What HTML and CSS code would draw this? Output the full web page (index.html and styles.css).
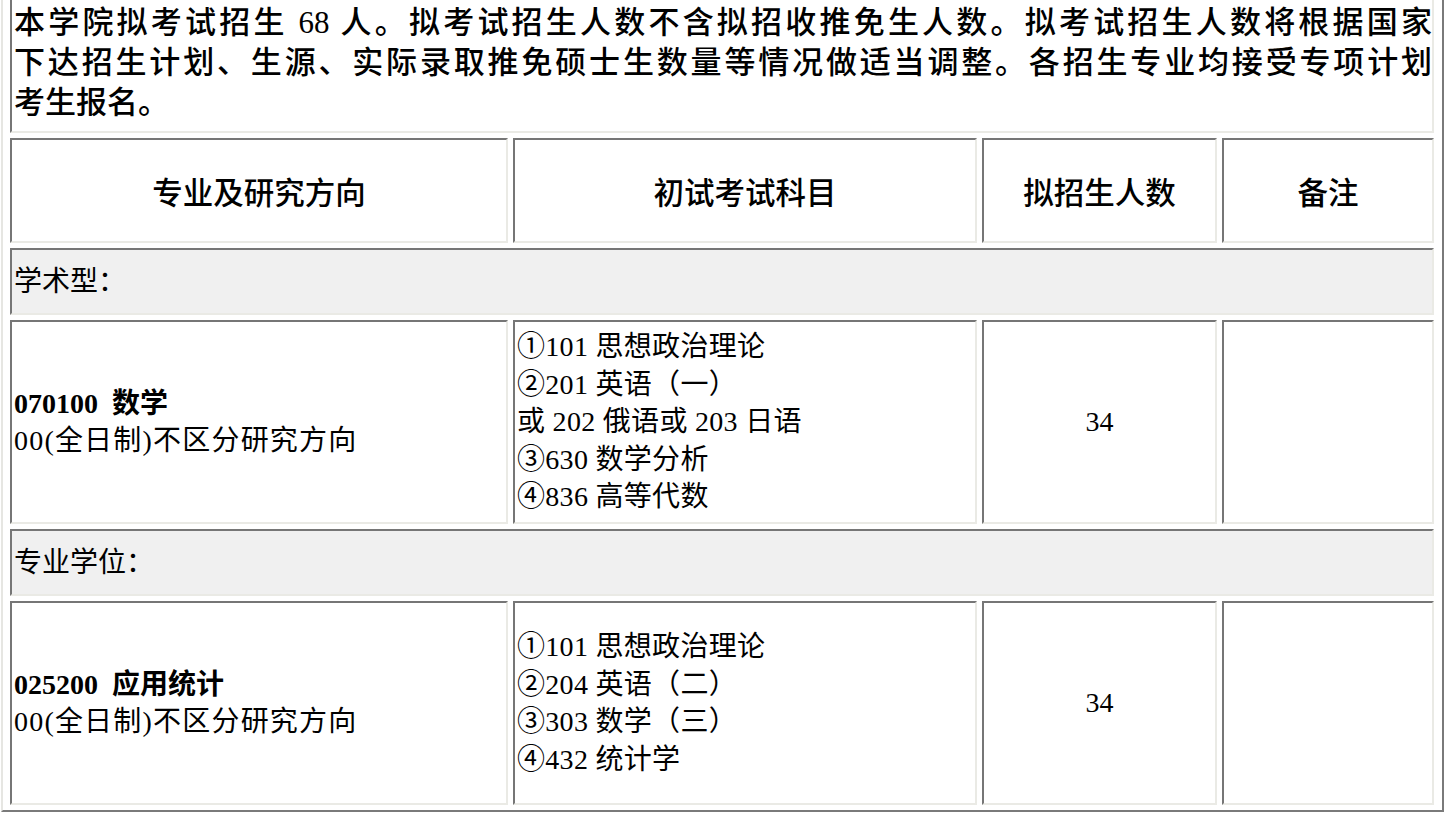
FILE: index.html
```html
<!DOCTYPE html>
<html lang="zh-CN">
<head>
<meta charset="utf-8">
<title>招生计划</title>
<link rel="stylesheet" href="styles.css">
</head>
<body>
<table class="plan">
  <tr>
    <td class="intro" colspan="4">
      <span class="jline">本学院拟考试招生 68 人。拟考试招生人数不含拟招收推免生人数。拟考试招生人数将根据国家</span>
      <span class="jline">下达招生计划、生源、实际录取推免硕士生数量等情况做适当调整。各招生专业均接受专项计划</span>
      <span class="lline">考生报名。</span>
    </td>
  </tr>
  <tr class="head">
    <td class="c1">专业及研究方向</td>
    <td class="c2">初试考试科目</td>
    <td class="c3">拟招生人数</td>
    <td class="c4">备注</td>
  </tr>
  <tr class="group">
    <td colspan="4">学术型：</td>
  </tr>
  <tr class="data">
    <td class="major"><b>070100&nbsp; 数学</b><br><span class="dir">00(全日制)不区分研究方向</span></td>
    <td class="subjects">①101 思想政治理论<br>②201 英语（一）<br>或 202 俄语或 203 日语<br>③630 数学分析<br>④836 高等代数</td>
    <td class="num">34</td>
    <td class="note"></td>
  </tr>
  <tr class="group">
    <td colspan="4">专业学位：</td>
  </tr>
  <tr class="data">
    <td class="major"><b>025200&nbsp; 应用统计</b><br><span class="dir">00(全日制)不区分研究方向</span></td>
    <td class="subjects">①101 思想政治理论<br>②204 英语（二）<br>③303 数学（三）<br>④432 统计学</td>
    <td class="num">34</td>
    <td class="note"></td>
  </tr>
</table>
</body>
</html>
```
FILE: styles.css
```css
html, body {
  margin: 0;
  padding: 0;
  background: #ffffff;
}

body {
  font-family: "Liberation Serif", "Noto Sans CJK SC", serif;
  color: #000000;
}

.plan {
  box-sizing: border-box;
  width: 1443px;
  margin: -10px 0 0 1px;
  border-collapse: separate;
  border-spacing: 5px;
  padding: 0 3px 0 2px;
  border-style: solid;
  border-width: 2px;
  border-color: #e6e6e2 #7a7a7a #7a7a7a #e6e6e2;
}

.plan td {
  box-sizing: border-box;
  border-style: solid;
  border-width: 2px;
  border-color: #767676 #eaeae5 #eaeae5 #767676;
  background: #ffffff;
  vertical-align: middle;
  padding: 0 0 0 2px;
}

.plan .intro {
  font-size: 31px;
  font-weight: 500;
  line-height: 40px;
  padding: 4px 0 8px 2px;
}

.jline {
  display: block;
  text-align: justify;
  text-align-last: justify;
}

.lline {
  display: block;
}

.plan .head td {
  height: 105px;
  font-size: 30.5px;
  font-weight: 500;
  text-align: center;
  padding: 0;
}

.head .c1 { width: 498px; }
.head .c2 { width: 464px; }
.head .c3 { width: 235px; }
.head .c4 { width: 212px; }

.plan .group td {
  height: 67px;
  background: #f0f0f0;
  font-size: 28px;
  line-height: 36px;
  padding: 0 0 0 2px;
}

.plan .data td {
  height: 204px;
  font-size: 28px;
  line-height: 37.5px;
}

.major b {
  font-weight: 700;
}

.dir {
  letter-spacing: 1.2px;
}

.subjects {
  letter-spacing: 0.3px;
}

.plan .num {
  text-align: center;
  padding: 0;
}
```
